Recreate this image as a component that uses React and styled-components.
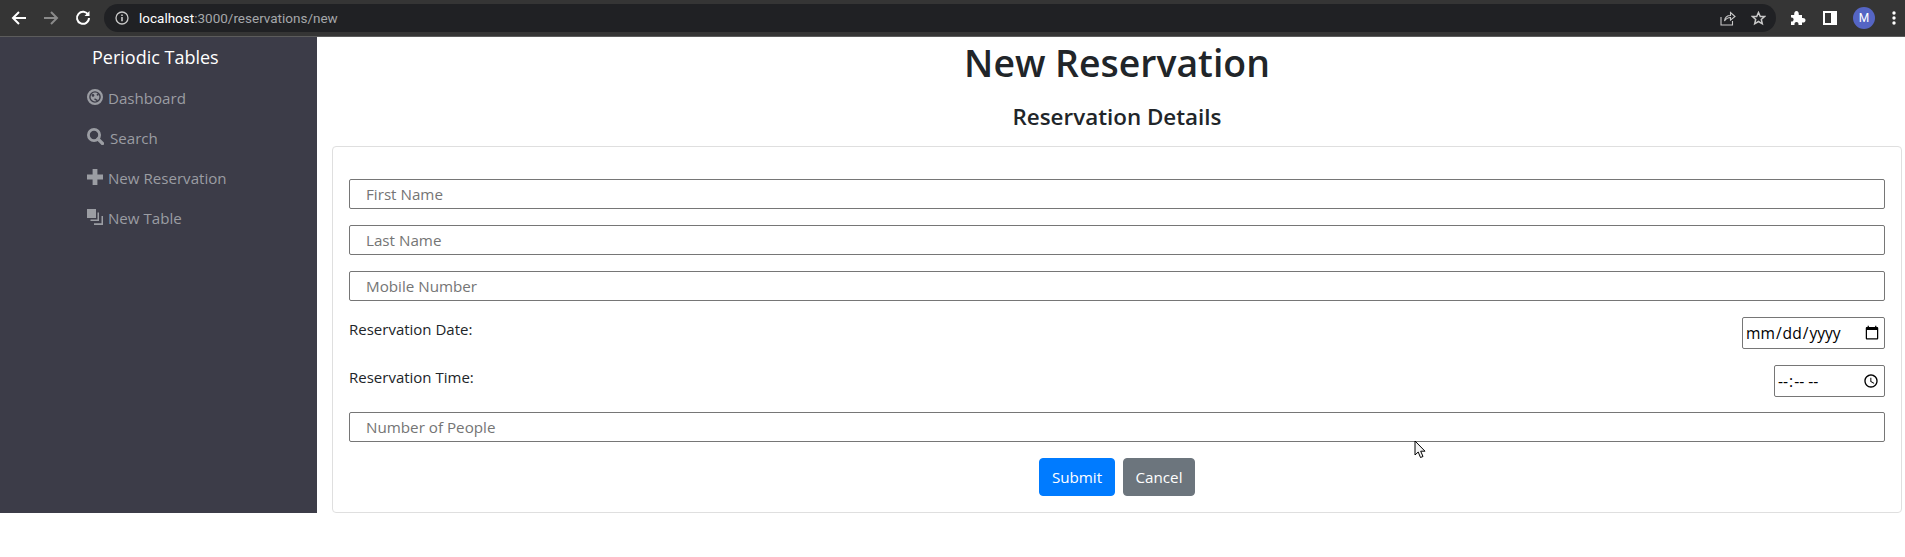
import React from "react";
import styled, { createGlobalStyle } from "styled-components";

const Global = createGlobalStyle`
  html, body { margin: 0; padding: 0; background: #fff; }
  body { font-family: "Open Sans", "Noto Sans", sans-serif; color: #212529; overflow: hidden; }
  * { box-sizing: border-box; }
`;

const Browser = styled.header`
  height: 37px;
  background: #353535;
  border-bottom: 1px solid #5c5c5c;
  display: flex;
  align-items: center;
  padding: 0 0 0 7px;
`;
const NavIcon = styled.span`
  width: 24px;
  height: 24px;
  margin-right: ${(p) => p.$gap || 8}px;
  display: flex;
  align-items: center;
  justify-content: center;
  color: ${(p) => p.$dim ? "#8a8a8a" : "#fff"};
`;
const Omnibox = styled.div`
  width: 1672px;
  height: 28px;
  margin-left: 4px;
  border-radius: 14px;
  background: #202124;
  display: flex;
  align-items: center;
  padding: 0 10px 0 11px;
  color: #c8c8c8;
`;
const Url = styled.div`
  flex: 1;
  margin-left: 10px;
  font: 13.5px/28px "Roboto", "Liberation Sans", sans-serif;
  color: #a5a7aa;
  b { font-weight: 400; color: #fff; }
`;
const OmniIcon = styled.span`
  display: flex;
  margin-left: ${(p) => p.$gap || 0}px;
`;
const Tools = styled.div`
  display: flex;
  align-items: center;
  margin-left: 14px;
  color: #fff;
`;
const Avatar = styled.span`
  width: 22px;
  height: 22px;
  margin-left: 16px;
  border-radius: 50%;
  background: #5565c4;
  color: #fff;
  font: 12px/22px "Roboto", sans-serif;
  text-align: center;
`;
const Dots = styled.span`
  margin-left: 17px;
  display: flex;
`;

const Shell = styled.div`
  display: flex;
  height: 476px;
`;
const Sidebar = styled.nav`
  width: 317px;
  flex: none;
  background: #3c3c48;
  padding-top: 8px;
`;
const Brand = styled.div`
  color: #fff;
  font-size: 18px;
  line-height: 24px;
  padding-left: 92px;
  height: 24px;
`;
const NavList = styled.div`
  display: flex;
  flex-direction: column;
  gap: 16px;
  padding: 17px 0 0 87px;
`;
const NavItem = styled.div`
  height: 24px;
  display: flex;
  align-items: center;
  color: #9b9da3;
  font-size: 15.1px;
  line-height: 24px;
  svg { flex: none; margin-right: 5px; margin-top: -3px; }
`;
const Main = styled.main`
  flex: 1;
  min-width: 0;
  padding: 0 3px 0 15px;
  text-align: center;
`;
const Title = styled.h1`
  margin: 0;
  font-size: 37.4px;
  font-weight: 600;
  line-height: 52px;
  height: 56px;
`;
const Subtitle = styled.h4`
  margin: 0;
  font-weight: 600;
  line-height: 28px;
  height: 53px;
  padding-top: 10px;
  font-size: 22.4px;
`;
const Card = styled.form`
  height: 367px;
  border: 1px solid #dfdfdf;
  border-radius: 4px;
  padding: 32px 16px 0;
  position: relative;
`;
const TextInput = styled.input`
  display: block;
  width: 100%;
  height: 30px;
  margin-bottom: 16px;
  padding: 0 16px;
  border: 1px solid #767676;
  border-radius: 2px;
  background: #fff;
  font: 15.2px "Open Sans", sans-serif;
  outline: none;
  &::placeholder { color: #757575; opacity: 1; }
`;
const FieldRow = styled.div`
  height: 32px;
  margin-bottom: ${(p) => p.$mb}px;
  display: flex;
  justify-content: space-between;
  align-items: flex-start;
`;
const FieldLabel = styled.label`
  font-size: 15px;
  line-height: 24px;
  color: #212529;
`;
const NativeInput = styled.input`
  width: ${(p) => p.$w}px;
  height: 32px;
  padding: 1px 2px;
  border: 1px solid #767676;
  border-radius: 2px;
  background: #fff;
  font: 15.6px "Open Sans", sans-serif;
  color: #000;
  &::-webkit-datetime-edit-text,
  &::-webkit-datetime-edit-hour-field,
  &::-webkit-datetime-edit-minute-field,
  &::-webkit-datetime-edit-ampm-field {
    letter-spacing: ${(p) => p.$ls || 0}px;
  }
`;
const Actions = styled.div`
  display: flex;
  justify-content: center;
  gap: 8px;
`;
const Button = styled.button`
  height: 38px;
  width: ${(p) => p.$w}px;
  border-radius: 4px;
  border: 1px solid ${(p) => p.$bg};
  background: ${(p) => p.$bg};
  color: #fff;
  padding: 0;
  font: 15.2px "Open Sans", sans-serif;
`;
const Cursor = styled.svg`
  position: absolute;
  left: 1081px;
  top: 293px;
`;

const Dashboard = () => (
  <svg width="16" height="16" viewBox="0 0 16 16">
    <circle cx="8" cy="8" r="6.9" fill="none" stroke="currentColor" strokeWidth="2.2" />
    <circle cx="8" cy="8" r="4.4" fill="currentColor" />
    <circle cx="6" cy="6.4" r="1.3" fill="#3c3c48" />
    <circle cx="10.6" cy="5.8" r="1" fill="#3c3c48" />
    <path d="M7.500 9.800l3 1.800" stroke="#3c3c48" strokeWidth="1.400" />
  </svg>
);
const Search = () => (
  <svg width="17" height="17" viewBox="0 0 17 17" style={{ marginRight: 6 }}>
    <circle cx="7" cy="7" r="5.600" fill="none" stroke="currentColor" strokeWidth="2.800" />
    <path d="M11 11l4.500 4.500" stroke="currentColor" strokeWidth="3.200" strokeLinecap="round" />
  </svg>
);
const Plus = () => (
  <svg width="16" height="16" viewBox="0 0 16 16">
    <path d="M5.600 0h4.800v5.600H16v4.800h-5.600V16H5.600v-5.600H0V5.600h5.600z" fill="currentColor" />
  </svg>
);
const Duplicate = () => (
  <svg width="16" height="16" viewBox="0 0 16 16">
    <path d="M0 0h9v9H0zM10.500 3.500H12V12H3.500v-1.500h7zM14.500 7H16v9H7v-1.800h7.500z" fill="currentColor" />
  </svg>
);

export default function App() {
  return (
    <>
      <Global />
      <Browser>
        <NavIcon>
          <svg width="16" height="16" viewBox="0 0 16 16" fill="none" stroke="currentColor" strokeWidth="2"><path d="M15 8H2M8 2L2 8l6 6" /></svg>
        </NavIcon>
        <NavIcon $dim>
          <svg width="16" height="16" viewBox="0 0 16 16" fill="none" stroke="currentColor" strokeWidth="2"><path d="M1 8h13M8 2l6 6-6 6" /></svg>
        </NavIcon>
        <NavIcon $gap={5}>
          <svg width="16" height="16" viewBox="0 0 16 16" fill="none" stroke="currentColor" strokeWidth="2"><path d="M13.300 5A6 6 0 1 0 14 8" /><path d="M14.500 1v5h-5" fill="currentColor" stroke="none" /></svg>
        </NavIcon>
        <Omnibox>
          <svg width="14" height="14" viewBox="0 0 14 14" fill="none" stroke="currentColor" strokeWidth="1.300"><circle cx="7" cy="7" r="6" /><path d="M7 6v4.200M7 3.400v1.500" strokeWidth="1.600" /></svg>
          <Url><b>localhost</b>:3000/reservations/new</Url>
          <OmniIcon>
            <svg width="16" height="16" viewBox="0 0 16 16" fill="none" stroke="currentColor" strokeWidth="1.100"><path d="M1 7v8h11.500v-4" /><path d="M4.500 11c.5-4 3-5.500 6-5.500V2.500L15 6.500l-4.500 3.700V7.500C8 7.500 6 8.800 4.500 11z" /></svg>
          </OmniIcon>
          <OmniIcon $gap={15}>
            <svg width="15" height="15" viewBox="0 0 15 15" fill="none" stroke="currentColor" strokeWidth="1.500"><path d="M7.500 1.500l1.800 4h4.300l-3.300 2.900 1 4.400-3.800-2.300-3.800 2.300 1-4.400L1.400 5.500h4.300z" /></svg>
          </OmniIcon>
        </Omnibox>
        <Tools>
          <svg width="16" height="16" viewBox="0 0 16 16" fill="currentColor"><path d="M1 5h3.200C4 2.500 5 1 6.500 1S9 2.500 8.800 5H12v3c2-.4 3.500.5 3.500 2.200S14 12.800 12 12.400V15H8.500c.3-2-.6-3-2-3s-2.300 1-2 3H1v-3.500c1.600.2 2.600-.7 2.600-2S2.600 7.200 1 7.500z" /></svg>
          <OmniIcon $gap={17}>
            <svg width="14" height="14" viewBox="0 0 14 14"><path fillRule="evenodd" fill="currentColor" d="M0 0h14v14H0zM2 2v10h6V2z" /></svg>
          </OmniIcon>
          <Avatar>M</Avatar>
          <Dots>
            <svg width="4" height="14" viewBox="0 0 4 14" fill="currentColor"><circle cx="2" cy="2" r="1.700" /><circle cx="2" cy="7" r="1.700" /><circle cx="2" cy="12" r="1.700" /></svg>
          </Dots>
        </Tools>
      </Browser>
      <Shell>
        <Sidebar>
          <Brand>Periodic Tables</Brand>
          <NavList>
            <NavItem><Dashboard />Dashboard</NavItem>
            <NavItem><Search />Search</NavItem>
            <NavItem><Plus />New Reservation</NavItem>
            <NavItem><Duplicate />New Table</NavItem>
          </NavList>
        </Sidebar>
        <Main>
          <Title>New Reservation</Title>
          <Subtitle>Reservation Details</Subtitle>
          <Card>
            <TextInput placeholder="First Name" />
            <TextInput placeholder="Last Name" />
            <TextInput placeholder="Mobile Number" />
            <FieldRow $mb={16}>
              <FieldLabel>Reservation Date:</FieldLabel>
              <NativeInput type="date" $w={143} />
            </FieldRow>
            <FieldRow $mb={15}>
              <FieldLabel>Reservation Time:</FieldLabel>
              <NativeInput type="time" $w={111} $ls={1.2} />
            </FieldRow>
            <TextInput placeholder="Number of People" />
            <Actions>
              <Button type="button" $bg="#007bff" $w={76}>Submit</Button>
              <Button type="button" $bg="#6c757d" $w={72}>Cancel</Button>
            </Actions>
            <Cursor width="12" height="19" viewBox="0 0 12 19">
              <path d="M1 1v14l3.200-3 2.300 5.500 2.500-1-2.300-5.300H11z" fill="#f4f4f4" stroke="#000" strokeWidth="1" />
            </Cursor>
          </Card>
        </Main>
      </Shell>
    </>
  );
}
